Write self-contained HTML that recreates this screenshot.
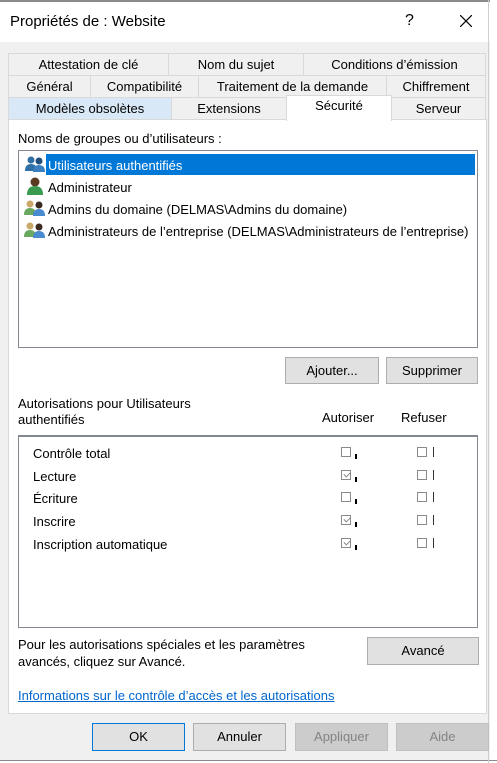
<!DOCTYPE html>
<html><head><meta charset="utf-8"><style>
*{box-sizing:border-box;margin:0;padding:0}
body{width:497px;height:763px;background:#fff;font-family:"Liberation Sans",sans-serif;font-size:13px;color:#000;position:relative;overflow:hidden}
.a{position:absolute;white-space:nowrap}
.tab{position:absolute;background:#f0f0f0;border:1px solid #d9d9d9;text-align:center;line-height:21px;font-size:13px}
.btn{position:absolute;background:#e1e1e1;border:1px solid #adadad;text-align:center;line-height:25px;font-size:13px}
.cb{position:absolute;width:10px;height:10px;border:1px solid #8a8a8a;background:#fff}
.cb.c::after{content:"";position:absolute;left:2px;top:1px;width:5px;height:3px;border-left:1px solid #888;border-bottom:1px solid #888;transform:rotate(-45deg)}
.tk{position:absolute;width:2px;height:5px;background:#000}
.bar{position:absolute;width:1px;height:10px;background:#333}
</style></head><body>
<div class="a" style="left:0;top:0;width:490px;height:2px;background:#8a8a8a"></div>
<div class="a" style="left:0;top:2px;width:497px;height:40px;background:#fff"></div>
<div class="a" style="left:10px;top:13px;font-size:15px">Propriétés de : Website</div>
<div class="a" style="left:405px;top:12px;font-size:16px">?</div>
<svg class="a" style="left:460px;top:15px" width="12" height="12"><path d="M0 0L12 12M12 0L0 12" stroke="#000" stroke-width="1.2"/></svg>
<div class="a" style="left:0;top:42px;width:490px;height:718px;background:#f0f0f0"></div>
<div class="a" style="left:0;top:760px;width:497px;height:1px;background:#8a8a8a"></div>
<div class="a" style="left:488px;top:0;width:1px;height:763px;background:#cfcfcf"></div>

<div class="tab" style="left:8px;top:53px;width:161px;height:23px">Attestation de clé</div>
<div class="tab" style="left:168px;top:53px;width:136px;height:23px">Nom du sujet</div>
<div class="tab" style="left:303px;top:53px;width:183px;height:23px">Conditions d’émission</div>
<div class="tab" style="left:8px;top:75px;width:83px;height:23px">Général</div>
<div class="tab" style="left:90px;top:75px;width:109px;height:23px">Compatibilité</div>
<div class="tab" style="left:198px;top:75px;width:189px;height:23px">Traitement de la demande</div>
<div class="tab" style="left:386px;top:75px;width:100px;height:23px">Chiffrement</div>
<div class="tab" style="left:8px;top:97px;width:164px;height:23px;background:#d9e8f6">Modèles obsolètes</div>
<div class="tab" style="left:171px;top:97px;width:116px;height:23px">Extensions</div>
<div class="tab" style="left:391px;top:97px;width:95px;height:23px">Serveur</div>

<div class="a" style="left:8px;top:119px;width:479px;height:595px;background:#fff;border:1px solid #d9d9d9"></div>
<div class="tab" style="left:286px;top:95px;width:106px;height:26px;background:#fff;border-bottom:none;line-height:20px">Sécurité</div>

<div class="a" style="left:18px;top:131px">Noms de groupes ou d’utilisateurs :</div>
<div class="a" style="left:18px;top:150px;width:460px;height:198px;border:1px solid #828790"></div>
<div class="a" style="left:46px;top:154px;width:429px;height:21px;background:#0078d7"></div>
<div class="a" style="left:48px;top:158px;color:#fff">Utilisateurs authentifiés</div>
<div class="a" style="left:48px;top:180px">Administrateur</div>
<div class="a" style="left:48px;top:202px">Admins du domaine (DELMAS\Admins du domaine)</div>
<div class="a" style="left:48px;top:224px">Administrateurs de l’entreprise (DELMAS\Administrateurs de l’entreprise)</div>
<svg class="a" style="left:24px;top:155px" width="22" height="88">
<g><circle cx="7" cy="5" r="3.5" fill="#2f6fa3"/><path d="M1 16q0-7 6-7t6 7z" fill="#2f6fa3"/><circle cx="15" cy="6" r="3.5" fill="#204f7c"/><path d="M9 17q0-7 6-7t6 7z" fill="#3b7fc0"/></g>
<g transform="translate(0,22)"><circle cx="11" cy="5" r="4.5" fill="#5a3a20"/><path d="M3 18q0-9 8-9t8 9z" fill="#3a9a50"/></g>
<g transform="translate(0,44)"><circle cx="6" cy="5" r="3.5" fill="#c9a86a"/><path d="M0 16q0-7 6-7t6 7z" fill="#6aa860"/><circle cx="15" cy="6" r="3.5" fill="#3a2a20"/><path d="M9 17q0-7 6-7t6 7z" fill="#4a8ad0"/></g>
<g transform="translate(0,66)"><circle cx="6" cy="5" r="3.5" fill="#c9a86a"/><path d="M0 16q0-7 6-7t6 7z" fill="#6aa860"/><circle cx="15" cy="6" r="3.5" fill="#3a2a20"/><path d="M9 17q0-7 6-7t6 7z" fill="#4a8ad0"/></g>
</svg>

<div class="btn" style="left:285px;top:357px;width:94px;height:27px">Ajouter...</div>
<div class="btn" style="left:386px;top:357px;width:92px;height:27px">Supprimer</div>

<div class="a" style="left:18px;top:396px;line-height:16px">Autorisations pour Utilisateurs<br>authentifiés</div>
<div class="a" style="left:322px;top:410px">Autoriser</div>
<div class="a" style="left:401px;top:410px">Refuser</div>
<div class="a" style="left:18px;top:435px;width:460px;height:193px;border:1px solid #828790;border-top:2px solid #828790"></div>

<div class="a" style="left:33px;top:446px">Contrôle total</div>
<div class="a" style="left:33px;top:469px">Lecture</div>
<div class="a" style="left:33px;top:491px">Écriture</div>
<div class="a" style="left:33px;top:514px">Inscrire</div>
<div class="a" style="left:33px;top:537px">Inscription automatique</div>

<div class="cb" style="left:341px;top:447px"></div><div class="tk" style="left:355px;top:454px"></div><div class="cb" style="left:417px;top:447px"></div><div class="bar" style="left:433px;top:447px"></div>
<div class="cb c" style="left:341px;top:470px"></div><div class="tk" style="left:355px;top:477px"></div><div class="cb" style="left:417px;top:470px"></div><div class="bar" style="left:433px;top:470px"></div>
<div class="cb" style="left:341px;top:492px"></div><div class="tk" style="left:355px;top:499px"></div><div class="cb" style="left:417px;top:492px"></div><div class="bar" style="left:433px;top:492px"></div>
<div class="cb c" style="left:341px;top:515px"></div><div class="tk" style="left:355px;top:522px"></div><div class="cb" style="left:417px;top:515px"></div><div class="bar" style="left:433px;top:515px"></div>
<div class="cb c" style="left:341px;top:538px"></div><div class="tk" style="left:355px;top:545px"></div><div class="cb" style="left:417px;top:538px"></div><div class="bar" style="left:433px;top:538px"></div>

<div class="a" style="left:18px;top:636px;line-height:17px">Pour les autorisations spéciales et les paramètres<br>avancés, cliquez sur Avancé.</div>
<div class="btn" style="left:367px;top:637px;width:112px;height:28px">Avancé</div>
<div class="a" style="left:18px;top:688px;color:#0066cc;text-decoration:underline">Informations sur le contrôle d’accès et les autorisations</div>

<div class="btn" style="left:92px;top:723px;width:93px;height:28px;border:1px solid #0078d7">OK</div>
<div class="btn" style="left:193px;top:723px;width:93px;height:28px">Annuler</div>
<div class="btn" style="left:295px;top:723px;width:93px;height:28px;background:#cccccc;border-color:#bfbfbf;color:#838383">Appliquer</div>
<div class="btn" style="left:396px;top:723px;width:93px;height:28px;background:#cccccc;border-color:#bfbfbf;color:#838383">Aide</div>
</body></html>
